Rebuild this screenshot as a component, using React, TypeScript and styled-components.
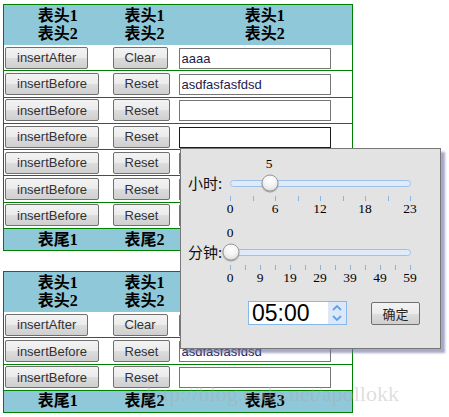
import React from "react";
import styled, { createGlobalStyle } from "styled-components";

const GlobalStyle = createGlobalStyle`
  html, body {
    margin: 0;
    padding: 0;
    background: #fff;
  }
  body {
    font-family: "Liberation Serif", "Noto Sans CJK SC", serif;
  }
`;

const BLUE = "#8fc8d8";
const GREEN = "#008000";

const Page = styled.div`
  position: relative;
  width: 449px;
  height: 417px;
  padding: 4px 0 0 3px;
  box-sizing: border-box;
  overflow: hidden;
`;

const Grid = styled.table`
  width: 350px;
  border-collapse: collapse;
  table-layout: fixed;
  border: 1px solid ${GREEN};
  margin-bottom: 20px;
`;

const Col = styled.col<{ $w: number }>`
  width: ${(p) => p.$w}px;
`;

const HeadCell = styled.th`
  background: ${BLUE};
  color: #000;
  font: bold 16px/18px "Liberation Serif", "Noto Sans CJK SC", serif;
  text-align: center;
  padding: 2px 0;
  height: 36px;
`;

const FootCell = styled.td`
  background: ${BLUE};
  color: #000;
  font: bold 16px/20px "Liberation Serif", "Noto Sans CJK SC", serif;
  text-align: center;
  padding: 0;
  height: 21px;
  border-top: 1px solid ${GREEN};
`;

const Row = styled.tr`
  border-bottom: 1px solid ${GREEN};
  &:last-child {
    border-bottom: none;
  }
`;

const Cell = styled.td<{ $pad?: number }>`
  padding: 0 ${(p) => p.$pad ?? 1}px;
  height: 25.3px;
  vertical-align: middle;
`;

const Btn = styled.button`
  display: block;
  height: 22px;
  padding: 0 11px;
  font: 13px "Liberation Sans", Arial, sans-serif;
  color: #333;
  border: 1px solid #707070;
  border-radius: 2px;
  background: linear-gradient(#f3f3f3 0%, #ebebeb 50%, #dddddd 51%, #cfcfcf 100%);
`;

const TextBox = styled.input<{ $focused?: boolean }>`
  display: block;
  width: 152px;
  height: 21px;
  box-sizing: border-box;
  margin: 1px 0 0;
  padding: 0 2px;
  border: 1px solid ${(p) => (p.$focused ? "#1a1a1a" : "#767676")};
  font: 13px "Liberation Sans", Arial, sans-serif;
  color: #1b1b4d;
  background: #fff;
  outline: none;
`;

/* time picker popup */

const Picker = styled.div`
  position: absolute;
  left: 180px;
  top: 148px;
  width: 261px;
  height: 201px;
  box-sizing: border-box;
  padding: 7px 0 0 7px;
  display: flex;
  flex-direction: column;
  background: #e3e3e3;
  border: 1px solid #777;
  box-shadow: 4px 4px 2px rgba(110, 110, 165, 0.6);
`;

const SliderBlock = styled.div`
  display: flex;
  flex-direction: column;
  & + & {
    margin-top: 8px;
  }
`;

const Scale = styled.div<{ $h: number }>`
  position: relative;
  margin-left: 42px;
  width: 180px;
  height: ${(p) => p.$h}px;
`;

const ScaleText = styled.span`
  position: absolute;
  top: 0;
  transform: translateX(-50%);
  font: 13.5px/16px "Liberation Serif", serif;
  color: #000;
  white-space: nowrap;
`;

const TrackRow = styled.div`
  display: flex;
  align-items: center;
  height: 22px;
`;

const SliderLabel = styled.span`
  width: 42px;
  font: 15px/22px "Noto Sans CJK SC", sans-serif;
  color: #111;
`;

const Track = styled.div`
  position: relative;
  width: 181px;
  height: 7px;
  box-sizing: border-box;
  border: 1px solid #9ec1ea;
  border-radius: 4px;
  background: #dfeafb;
`;

const Thumb = styled.div`
  position: absolute;
  top: 50%;
  width: 17px;
  height: 17px;
  box-sizing: border-box;
  border-radius: 50%;
  border: 1px solid #9a9a9a;
  background: radial-gradient(circle at 50% 30%, #ffffff 0%, #f4f4f4 45%, #d6d6d6 100%);
  box-shadow: 0 1px 1px rgba(0, 0, 0, 0.35);
  transform: translate(-50%, -50%);
`;

const Ticks = styled.div`
  display: flex;
  justify-content: space-between;
  margin: 2px 0 0 42px;
  width: 181px;
  height: 5px;
`;

const Tick = styled.i`
  display: block;
  width: 1px;
  height: 5px;
  background: #8ab4e0;
`;

const PickerFooter = styled.div`
  display: flex;
  align-items: center;
  margin: 15px 0 0 60px;
  gap: 24px;
`;

const TimeBox = styled.div`
  display: flex;
  width: 99px;
  height: 24px;
  box-sizing: border-box;
  border: 1px solid #86b8ec;
  background: #fff;
`;

const TimeText = styled.span`
  flex: 1;
  padding-left: 3px;
  font: 23px/22px "Liberation Sans", Arial, sans-serif;
  color: #000;
`;

const Spinner = styled.div`
  width: 18px;
  display: flex;
  flex-direction: column;
  align-items: center;
  justify-content: center;
  gap: 4px;
  background: #dce8fa;
`;

const OkBtn = styled.button`
  width: 49px;
  height: 23px;
  padding: 0;
  font: 13px "Noto Sans CJK SC", sans-serif;
  color: #222;
  border: 1px solid #707070;
  border-radius: 2px;
  background: linear-gradient(#f3f3f3 0%, #ebebeb 50%, #dddddd 51%, #cfcfcf 100%);
`;

const Watermark = styled.div`
  position: absolute;
  left: 146px;
  top: 381px;
  font: 22px "Liberation Serif", serif;
  color: rgba(170, 170, 170, 0.4);
  pointer-events: none;
  white-space: nowrap;
`;

type RowData = { left: string; mid: string; value: string; focused?: boolean };

const table1: RowData[] = [
  { left: "insertAfter", mid: "Clear", value: "aaaa" },
  { left: "insertBefore", mid: "Reset", value: "asdfasfasfdsd" },
  { left: "insertBefore", mid: "Reset", value: "" },
  { left: "insertBefore", mid: "Reset", value: "", focused: true },
  { left: "insertBefore", mid: "Reset", value: "" },
  { left: "insertBefore", mid: "Reset", value: "" },
  { left: "insertBefore", mid: "Reset", value: "" },
];

const table2: RowData[] = [
  { left: "insertAfter", mid: "Clear", value: "" },
  { left: "insertBefore", mid: "Reset", value: "asdfasfasfdsd" },
  { left: "insertBefore", mid: "Reset", value: "" },
];

const DataTable = ({ rows }: { rows: RowData[] }) => (
  <Grid>
    <colgroup>
      <Col $w={108} />
      <Col $w={66} />
      <Col $w={175} />
    </colgroup>
    <thead>
      <tr>
        {[0, 1, 2].map((i) => (
          <HeadCell key={i}>
            表头1
            <br />
            表头2
          </HeadCell>
        ))}
      </tr>
    </thead>
    <tbody>
      {rows.map((r, i) => (
        <Row key={i}>
          <Cell>
            <Btn>{r.left}</Btn>
          </Cell>
          <Cell>
            <Btn>{r.mid}</Btn>
          </Cell>
          <Cell $pad={1}>
            <TextBox defaultValue={r.value} $focused={r.focused} />
          </Cell>
        </Row>
      ))}
    </tbody>
    <tfoot>
      <tr>
        <FootCell>表尾1</FootCell>
        <FootCell>表尾2</FootCell>
        <FootCell>表尾3</FootCell>
      </tr>
    </tfoot>
  </Grid>
);

type SliderProps = {
  label: string;
  value: number;
  max: number;
  ticks: number;
  marks: number[];
};

const Slider = ({ label, value, max, ticks, marks }: SliderProps) => {
  const pct = (v: number) => `${(v / max) * 100}%`;
  const markPos = (i: number) => `${(i / (marks.length - 1)) * 100}%`;
  return (
    <SliderBlock>
      <Scale $h={16}>
        <ScaleText style={{ left: pct(value) }}>{value}</ScaleText>
      </Scale>
      <TrackRow>
        <SliderLabel>{label}</SliderLabel>
        <Track>
          <Thumb style={{ left: pct(value) }} />
        </Track>
      </TrackRow>
      <Ticks>
        {Array.from({ length: ticks }, (_, i) => (
          <Tick key={i} />
        ))}
      </Ticks>
      <Scale $h={16}>
        {marks.map((m, i) => (
          <ScaleText key={m} style={{ left: markPos(i) }}>
            {m}
          </ScaleText>
        ))}
      </Scale>
    </SliderBlock>
  );
};

const Chevron = ({ up }: { up?: boolean }) => (
  <svg width="10" height="6" viewBox="0 0 10 6">
    <polyline
      points={up ? "1,5 5,1 9,5" : "1,1 5,5 9,1"}
      fill="none"
      stroke="#5fa3e8"
      strokeWidth="1.8"
    />
  </svg>
);

const App = () => (
  <>
    <GlobalStyle />
    <Page>
      <DataTable rows={table1} />
      <DataTable rows={table2} />
      <Picker>
        <Slider label="小时:" value={5} max={23} ticks={9} marks={[0, 6, 12, 18, 23]} />
        <Slider
          label="分钟:"
          value={0}
          max={59}
          ticks={13}
          marks={[0, 9, 19, 29, 39, 49, 59]}
        />
        <PickerFooter>
          <TimeBox>
            <TimeText>05:00</TimeText>
            <Spinner>
              <Chevron up />
              <Chevron />
            </Spinner>
          </TimeBox>
          <OkBtn>确定</OkBtn>
        </PickerFooter>
      </Picker>
      <Watermark>http://blog.csdn.net/apollokk</Watermark>
    </Page>
  </>
);

export default App;
